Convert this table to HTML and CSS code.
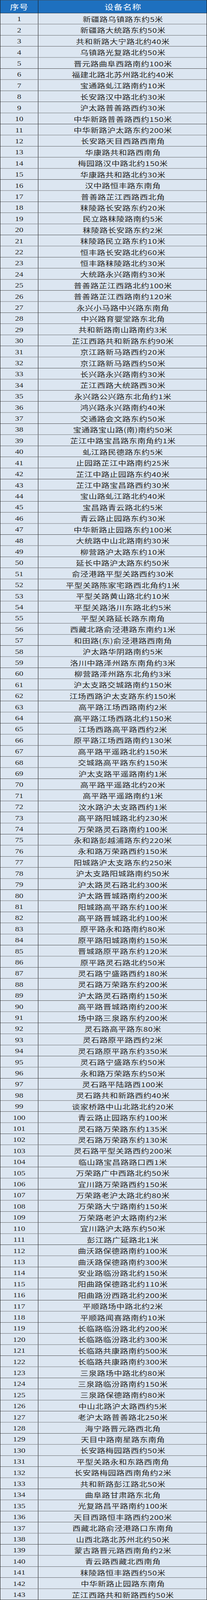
FILE: index.html
```html
<!DOCTYPE html>
<html lang="zh-CN">
<head>
<meta charset="utf-8">
<title>设备名称</title>
<link rel="stylesheet" href="styles.css">
</head>
<body>
<div class="page">
<div class="sheet">
<div class="row head"><div class="no">序号</div><div class="name">设备名称</div></div>
<div class="row"><div class="no">1</div><div class="name">新疆路乌镇路东约5米</div></div>
<div class="row"><div class="no">2</div><div class="name">新疆路大统路东约50米</div></div>
<div class="row"><div class="no">3</div><div class="name">共和新路大宁路北约40米</div></div>
<div class="row"><div class="no">4</div><div class="name">乌镇路光复路北约50米</div></div>
<div class="row"><div class="no">5</div><div class="name">晋元路曲阜西路南约100米</div></div>
<div class="row"><div class="no">6</div><div class="name">福建北路北苏州路北约40米</div></div>
<div class="row"><div class="no">7</div><div class="name">宝通路虬江路南约10米</div></div>
<div class="row"><div class="no">8</div><div class="name">长安路汉中路北约30米</div></div>
<div class="row"><div class="no">9</div><div class="name">沪太路普善路西约30米</div></div>
<div class="row"><div class="no">10</div><div class="name">中华新路普善路西约150米</div></div>
<div class="row"><div class="no">11</div><div class="name">中华新路沪太路东约200米</div></div>
<div class="row"><div class="no">12</div><div class="name">长安路天目西路西南角</div></div>
<div class="row"><div class="no">13</div><div class="name">华康路共和路西南角</div></div>
<div class="row"><div class="no">14</div><div class="name">梅园路汉中路北约150米</div></div>
<div class="row"><div class="no">15</div><div class="name">华康路共和路北约30米</div></div>
<div class="row"><div class="no">16</div><div class="name">汉中路恒丰路东南角</div></div>
<div class="row"><div class="no">17</div><div class="name">普善路芷江西路西北角</div></div>
<div class="row"><div class="no">18</div><div class="name">秣陵路长安路东约20米</div></div>
<div class="row"><div class="no">19</div><div class="name">民立路秣陵路南约5米</div></div>
<div class="row"><div class="no">20</div><div class="name">秣陵路长安路东约2米</div></div>
<div class="row"><div class="no">21</div><div class="name">秣陵路民立路东约10米</div></div>
<div class="row"><div class="no">22</div><div class="name">恒丰路长安路北约60米</div></div>
<div class="row"><div class="no">23</div><div class="name">恒丰路秣陵路北约30米</div></div>
<div class="row"><div class="no">24</div><div class="name">大统路永兴路南约30米</div></div>
<div class="row"><div class="no">25</div><div class="name">普善路芷江西路北约100米</div></div>
<div class="row"><div class="no">26</div><div class="name">普善路芷江西路南约120米</div></div>
<div class="row"><div class="no">27</div><div class="name">永兴小马路中兴路东南角</div></div>
<div class="row"><div class="no">28</div><div class="name">中兴路育婴堂路东北角</div></div>
<div class="row"><div class="no">29</div><div class="name">共和新路南山路南约3米</div></div>
<div class="row"><div class="no">30</div><div class="name">芷江西路共和新路东约90米</div></div>
<div class="row"><div class="no">31</div><div class="name">京江路新马路西约20米</div></div>
<div class="row"><div class="no">32</div><div class="name">京江路新马路西约50米</div></div>
<div class="row"><div class="no">33</div><div class="name">长兴路永兴路南约30米</div></div>
<div class="row"><div class="no">34</div><div class="name">芷江西路大统路西30米</div></div>
<div class="row"><div class="no">35</div><div class="name">永兴路公兴路东北角约1米</div></div>
<div class="row"><div class="no">36</div><div class="name">鸿兴路永兴路南约40米</div></div>
<div class="row"><div class="no">37</div><div class="name">交通路会文路东约50米</div></div>
<div class="row"><div class="no">38</div><div class="name">宝通路宝山路(南)南约50米</div></div>
<div class="row"><div class="no">39</div><div class="name">芷江中路宝昌路东南角约1米</div></div>
<div class="row"><div class="no">40</div><div class="name">虬江路民德路东约5米</div></div>
<div class="row"><div class="no">41</div><div class="name">止园路芷江中路南约25米</div></div>
<div class="row"><div class="no">42</div><div class="name">芷江中路止园路东约40米</div></div>
<div class="row"><div class="no">43</div><div class="name">芷江中路宝昌路西约30米</div></div>
<div class="row"><div class="no">44</div><div class="name">宝山路虬江路北约40米</div></div>
<div class="row"><div class="no">45</div><div class="name">宝昌路青云路北约5米</div></div>
<div class="row"><div class="no">46</div><div class="name">青云路止园路东约30米</div></div>
<div class="row"><div class="no">47</div><div class="name">中华新路止园路东约100米</div></div>
<div class="row"><div class="no">48</div><div class="name">大统路中山北路南约30米</div></div>
<div class="row"><div class="no">49</div><div class="name">柳营路沪太路东约10米</div></div>
<div class="row"><div class="no">50</div><div class="name">延长中路沪太路东约50米</div></div>
<div class="row"><div class="no">51</div><div class="name">俞泾港路平型关路西约30米</div></div>
<div class="row"><div class="no">52</div><div class="name">平型关路陈家宅路西北角约1米</div></div>
<div class="row"><div class="no">53</div><div class="name">平型关路黄山路北约10米</div></div>
<div class="row"><div class="no">54</div><div class="name">平型关路洛川东路北约5米</div></div>
<div class="row"><div class="no">55</div><div class="name">平型关路延长路东南角</div></div>
<div class="row"><div class="no">56</div><div class="name">西藏北路俞泾港路东南约1米</div></div>
<div class="row"><div class="no">57</div><div class="name">和田路(东)俞泾港路西南角</div></div>
<div class="row"><div class="no">58</div><div class="name">沪太路华阴路南约5米</div></div>
<div class="row"><div class="no">59</div><div class="name">洛川中路泽州路东南角约3米</div></div>
<div class="row"><div class="no">60</div><div class="name">柳营路泽州路东北角约3米</div></div>
<div class="row"><div class="no">61</div><div class="name">沪太支路交城路南约150米</div></div>
<div class="row"><div class="no">62</div><div class="name">江场西路沪太支路东约150米</div></div>
<div class="row"><div class="no">63</div><div class="name">高平路江场西路南约2米</div></div>
<div class="row"><div class="no">64</div><div class="name">高平路江场西路北约150米</div></div>
<div class="row"><div class="no">65</div><div class="name">江场西路高平路西约2米</div></div>
<div class="row"><div class="no">66</div><div class="name">原平路江场西路南约130米</div></div>
<div class="row"><div class="no">67</div><div class="name">高平路平遥路北约150米</div></div>
<div class="row"><div class="no">68</div><div class="name">交城路高平路东约150米</div></div>
<div class="row"><div class="no">69</div><div class="name">沪太支路平遥路南约1米</div></div>
<div class="row"><div class="no">70</div><div class="name">高平路平遥路北约20米</div></div>
<div class="row"><div class="no">71</div><div class="name">高平路平遥路南约1米</div></div>
<div class="row"><div class="no">72</div><div class="name">汶水路沪太支路西约1米</div></div>
<div class="row"><div class="no">73</div><div class="name">高平路阳城路北约230米</div></div>
<div class="row"><div class="no">74</div><div class="name">万荣路灵石路南约100米</div></div>
<div class="row"><div class="no">75</div><div class="name">永和路彭越浦路东约220米</div></div>
<div class="row"><div class="no">76</div><div class="name">永和路万荣路西约150米</div></div>
<div class="row"><div class="no">77</div><div class="name">阳城路沪太支路东约250米</div></div>
<div class="row"><div class="no">78</div><div class="name">沪太支路阳城路南约50米</div></div>
<div class="row"><div class="no">79</div><div class="name">沪太路灵石路北约300米</div></div>
<div class="row"><div class="no">80</div><div class="name">沪太路晋城路南约200米</div></div>
<div class="row"><div class="no">81</div><div class="name">阳城路高平路东约100米</div></div>
<div class="row"><div class="no">82</div><div class="name">高平路晋城路北约100米</div></div>
<div class="row"><div class="no">83</div><div class="name">原平路永和路南约80米</div></div>
<div class="row"><div class="no">84</div><div class="name">原平路阳城路南约150米</div></div>
<div class="row"><div class="no">85</div><div class="name">晋城路原平路东约120米</div></div>
<div class="row"><div class="no">86</div><div class="name">原平路灵石路北约50米</div></div>
<div class="row"><div class="no">87</div><div class="name">灵石路宁盛路西约180米</div></div>
<div class="row"><div class="no">88</div><div class="name">灵石路万荣路东约200米</div></div>
<div class="row"><div class="no">89</div><div class="name">沪太路灵石路南约150米</div></div>
<div class="row"><div class="no">90</div><div class="name">高平路晋城路南约200米</div></div>
<div class="row"><div class="no">91</div><div class="name">场中路三泉路东约200米</div></div>
<div class="row"><div class="no">92</div><div class="name">灵石路高平路东80米</div></div>
<div class="row"><div class="no">93</div><div class="name">灵石路原平路西约2米</div></div>
<div class="row"><div class="no">94</div><div class="name">灵石路原平路东约350米</div></div>
<div class="row"><div class="no">95</div><div class="name">灵石路宁盛路东约50米</div></div>
<div class="row"><div class="no">96</div><div class="name">永和路万荣路东约50米</div></div>
<div class="row"><div class="no">97</div><div class="name">灵石路平陆路西100米</div></div>
<div class="row"><div class="no">98</div><div class="name">灵石路共和新路西约40米</div></div>
<div class="row"><div class="no">99</div><div class="name">谈家桥路中山北路北约20米</div></div>
<div class="row"><div class="no">100</div><div class="name">青云路止园路东约100米</div></div>
<div class="row"><div class="no">101</div><div class="name">灵石路万荣路东约135米</div></div>
<div class="row"><div class="no">102</div><div class="name">灵石路万荣路东约130米</div></div>
<div class="row"><div class="no">103</div><div class="name">灵石路平型关路西约200米</div></div>
<div class="row"><div class="no">104</div><div class="name">临山路宝昌路路口西1米</div></div>
<div class="row"><div class="no">105</div><div class="name">万荣路广中西路北约50米</div></div>
<div class="row"><div class="no">106</div><div class="name">宜川路万荣路西约150米</div></div>
<div class="row"><div class="no">107</div><div class="name">万荣路老沪太路北约80米</div></div>
<div class="row"><div class="no">108</div><div class="name">万荣路大宁路南约150米</div></div>
<div class="row"><div class="no">109</div><div class="name">万荣路老沪太路南约2米</div></div>
<div class="row"><div class="no">110</div><div class="name">宜川路沪太路东约50米</div></div>
<div class="row"><div class="no">111</div><div class="name">彭江路广延路北1米</div></div>
<div class="row"><div class="no">112</div><div class="name">曲沃路保德路南约100米</div></div>
<div class="row"><div class="no">113</div><div class="name">曲沃路保德路南约300米</div></div>
<div class="row"><div class="no">114</div><div class="name">安业路临汾路北约150米</div></div>
<div class="row"><div class="no">115</div><div class="name">阳曲路保德路北约110米</div></div>
<div class="row"><div class="no">116</div><div class="name">阳曲路汾西路北约200米</div></div>
<div class="row"><div class="no">117</div><div class="name">平顺路场中路北约2米</div></div>
<div class="row"><div class="no">118</div><div class="name">平顺路闻喜路南约10米</div></div>
<div class="row"><div class="no">119</div><div class="name">长临路临汾路北约200米</div></div>
<div class="row"><div class="no">120</div><div class="name">长临路临汾路北约300米</div></div>
<div class="row"><div class="no">121</div><div class="name">长临路共康路南约500米</div></div>
<div class="row"><div class="no">122</div><div class="name">长临路共康路南约300米</div></div>
<div class="row"><div class="no">123</div><div class="name">三泉路场中路北约80米</div></div>
<div class="row"><div class="no">124</div><div class="name">三泉路临汾路南约150米</div></div>
<div class="row"><div class="no">125</div><div class="name">三泉路保德路南约80米</div></div>
<div class="row"><div class="no">126</div><div class="name">中山北路沪太路西约5米</div></div>
<div class="row"><div class="no">127</div><div class="name">老沪太路普善路北250米</div></div>
<div class="row"><div class="no">128</div><div class="name">海宁路晋元路西北角</div></div>
<div class="row"><div class="no">129</div><div class="name">天目中路南星路东南角</div></div>
<div class="row"><div class="no">130</div><div class="name">长安路梅园路西约50米</div></div>
<div class="row"><div class="no">131</div><div class="name">平型关路永和东路西南角</div></div>
<div class="row"><div class="no">132</div><div class="name">长安路梅园路西南角约2米</div></div>
<div class="row"><div class="no">133</div><div class="name">共和新路彭江路北50米</div></div>
<div class="row"><div class="no">134</div><div class="name">曲阜路甘肃路东北角</div></div>
<div class="row"><div class="no">135</div><div class="name">光复路昌平路南约100米</div></div>
<div class="row"><div class="no">136</div><div class="name">天目西路恒丰路西约200米</div></div>
<div class="row"><div class="no">137</div><div class="name">西藏北路俞泾港路口东南角</div></div>
<div class="row"><div class="no">138</div><div class="name">山西北路北苏州北约50米</div></div>
<div class="row"><div class="no">139</div><div class="name">蒙古路晋元路西南角约2米</div></div>
<div class="row"><div class="no">140</div><div class="name">青云路西藏北西南角</div></div>
<div class="row"><div class="no">141</div><div class="name">秣陵路恒丰路西约50米</div></div>
<div class="row"><div class="no">142</div><div class="name">中华新路止园路东南角</div></div>
<div class="row"><div class="no">143</div><div class="name">芷江西路共和新路西约50米</div></div>
</div>
</div>
</body>
</html>
```
FILE: styles.css
```css
html, body {
  margin: 0;
  padding: 0;
  background: #ffffff;
}

.page {
  width: 529px;
  height: 4096px;
  overflow: hidden;
}

.sheet {
  width: 529px;
  box-sizing: border-box;
  border-top: 1px solid #161616;
  border-left: 1px solid #161616;
  border-right: 1px solid #161616;
  transform: scaleY(0.789058);
  transform-origin: 0 0;
}

.row {
  display: grid;
  grid-template-columns: 97px 1fr;
  height: 36px;
  box-sizing: border-box;
  border-bottom: 1px solid #161616;
  background: #dce6f1;
  color: #262626;
}

.row > div {
  display: flex;
  align-items: center;
  justify-content: center;
  white-space: nowrap;
}

.no {
  border-right: 1px solid #161616;
  font-family: "Liberation Serif", "Noto Sans CJK SC", serif;
  font-size: 21px;
  padding-top: 3px;
}

.name {
  font-family: "Noto Sans CJK SC", "Noto Sans CJK TC", sans-serif;
  font-size: 21px;
  letter-spacing: 0.5px;
  padding-top: 2px;
  padding-left: 2px;
}

.row.head {
  height: 42px;
  background: #1e70bf;
  color: #ffffff;
}

.row.head .no,
.row.head .name {
  font-family: "Noto Sans CJK SC", sans-serif;
  font-size: 23px;
  letter-spacing: 0.5px;
  padding-top: 0;
}
```
